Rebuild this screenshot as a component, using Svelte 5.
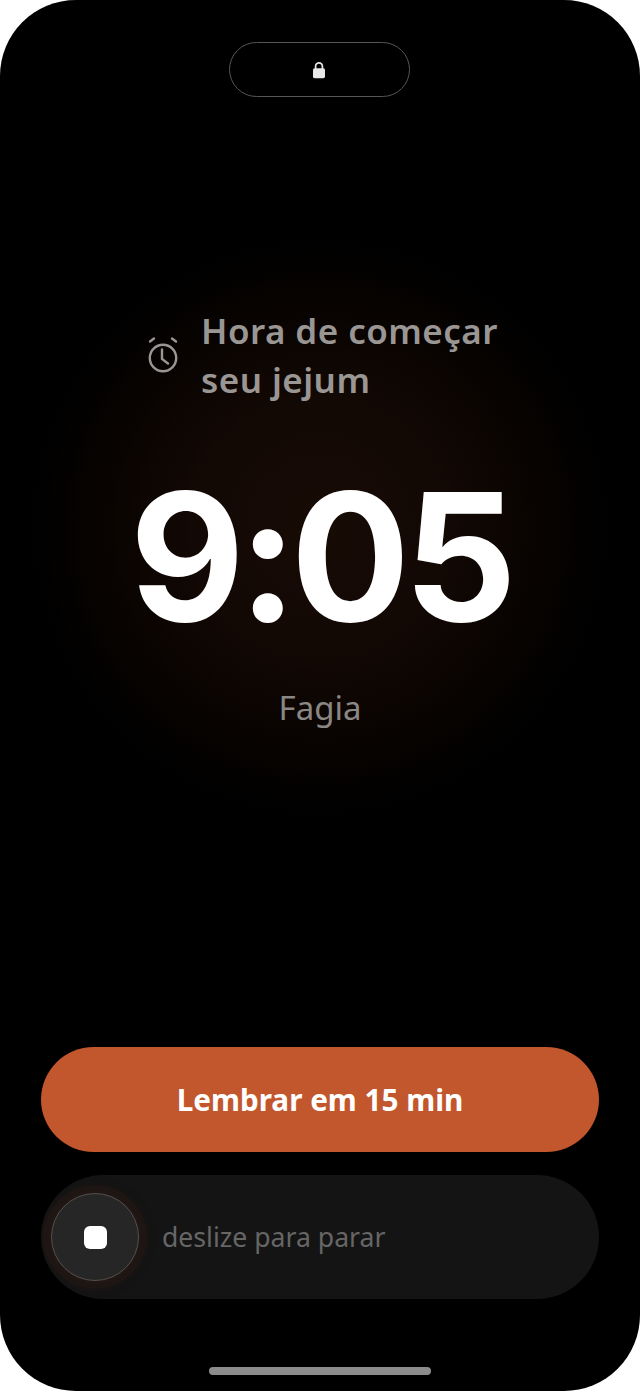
<script>
  const title = ['Hora de começar', 'seu jejum'];
</script>

<div class="phone">
  <div class="island">
    <svg class="lock" viewBox="0 0 14 18" width="14" height="18" aria-hidden="true">
      <path d="M3.6 8V5.2a3.4 3.4 0 0 1 6.8 0V8" fill="none" stroke="#e8e8e8" stroke-width="1.7"/>
      <rect x="1" y="7.2" width="12" height="10" rx="1.6" fill="#e8e8e8"/>
    </svg>
  </div>

  <main class="center">
    <div class="alarm">
      <svg class="clock" viewBox="0 0 32 40" width="32" height="40" aria-hidden="true">
        <g fill="none" stroke="#9a9694" stroke-width="2.4" stroke-linecap="round">
          <circle cx="16" cy="23" r="13.2"/>
          <path d="M15 14.5V24l6 4.5"/>
          <path d="M3 6.5 7 3.5"/>
          <path d="M29 6.5 25 3.5"/>
        </g>
      </svg>
      <h1>
        {#each title as line}
          <span>{line}</span>
        {/each}
      </h1>
    </div>
    <div class="time">9:05</div>
    <div class="app">Fagia</div>
  </main>

  <section class="actions">
    <button class="snooze">Lembrar em 15 min</button>
    <div class="slider">
      <div class="knob"><span class="stop"></span></div>
      <span class="hint">deslize para parar</span>
    </div>
  </section>

  <div class="home"></div>
</div>

<style>
  :global(body) {
    margin: 0;
    background: #fff;
  }
  .phone {
    width: 640px;
    height: 1391px;
    box-sizing: border-box;
    background: #000;
    border-radius: 76px;
    overflow: hidden;
    display: flex;
    flex-direction: column;
    align-items: center;
    padding-top: 42px;
    font-family: "Noto Sans", "Liberation Sans", sans-serif;
  }
  .island {
    width: 181px;
    height: 55px;
    box-sizing: border-box;
    border: 1.5px solid #565656;
    border-radius: 28px;
    display: flex;
    align-items: center;
    justify-content: center;
    flex: none;
    margin-right: 2px;
  }
  .lock {
    display: block;
  }
  .center {
    width: 640px;
    height: 895px;
    flex: none;
    display: flex;
    flex-direction: column;
    align-items: center;
    background: radial-gradient(circle 290px at 320px 430px, #170b05 0%, #120804 45%, #070301 78%, #000 100%);
    box-sizing: border-box;
    padding-top: 209px;
  }
  .alarm {
    display: flex;
    align-items: center;
    gap: 22px;
    align-self: flex-start;
    margin-left: 147px;
  }
  .clock {
    display: block;
  }
  h1 {
    margin: 0;
    font-size: 35px;
    line-height: 49px;
    font-weight: 600;
    letter-spacing: 0.45px;
    color: #9a9694;
    display: flex;
    flex-direction: column;
  }
  .time {
    font-family: Inter, sans-serif;
    font-size: 177px;
    line-height: 177px;
    font-weight: 700;
    letter-spacing: -6.5px;
    color: #fff;
    margin-top: 65px;
  }
  .app {
    font-size: 33px;
    line-height: 44px;
    color: #8a8785;
    margin-top: 40px;
  }
  .actions {
    width: 558px;
    flex: none;
    display: flex;
    flex-direction: column;
    gap: 23px;
    margin-top: 55px;
  }
  .snooze {
    height: 105px;
    border: none;
    border-radius: 53px;
    background: #c2562c;
    color: #fff;
    font: 700 29.7px "Noto Sans", "Liberation Sans", sans-serif;
    padding: 0;
  }
  .slider {
    height: 124px;
    border-radius: 62px;
    background: #141414;
    display: flex;
    align-items: center;
    padding-left: 10px;
    gap: 23px;
  }
  .knob {
    width: 88px;
    height: 88px;
    box-sizing: border-box;
    border-radius: 50%;
    background: #262626;
    border: 1px solid #55504c;
    box-shadow: 0 0 0 8px rgba(60, 28, 20, 0.2), 0 0 12px 6px rgba(60, 28, 20, 0.18);
    display: flex;
    align-items: center;
    justify-content: center;
  }
  .stop {
    width: 23px;
    height: 23px;
    border-radius: 6px;
    background: #fff;
  }
  .hint {
    font-size: 26.6px;
    color: #666;
  }
  .home {
    width: 222px;
    height: 8px;
    flex: none;
    border-radius: 4px;
    background: #8c8c8c;
    margin-top: 68px;
  }
</style>
